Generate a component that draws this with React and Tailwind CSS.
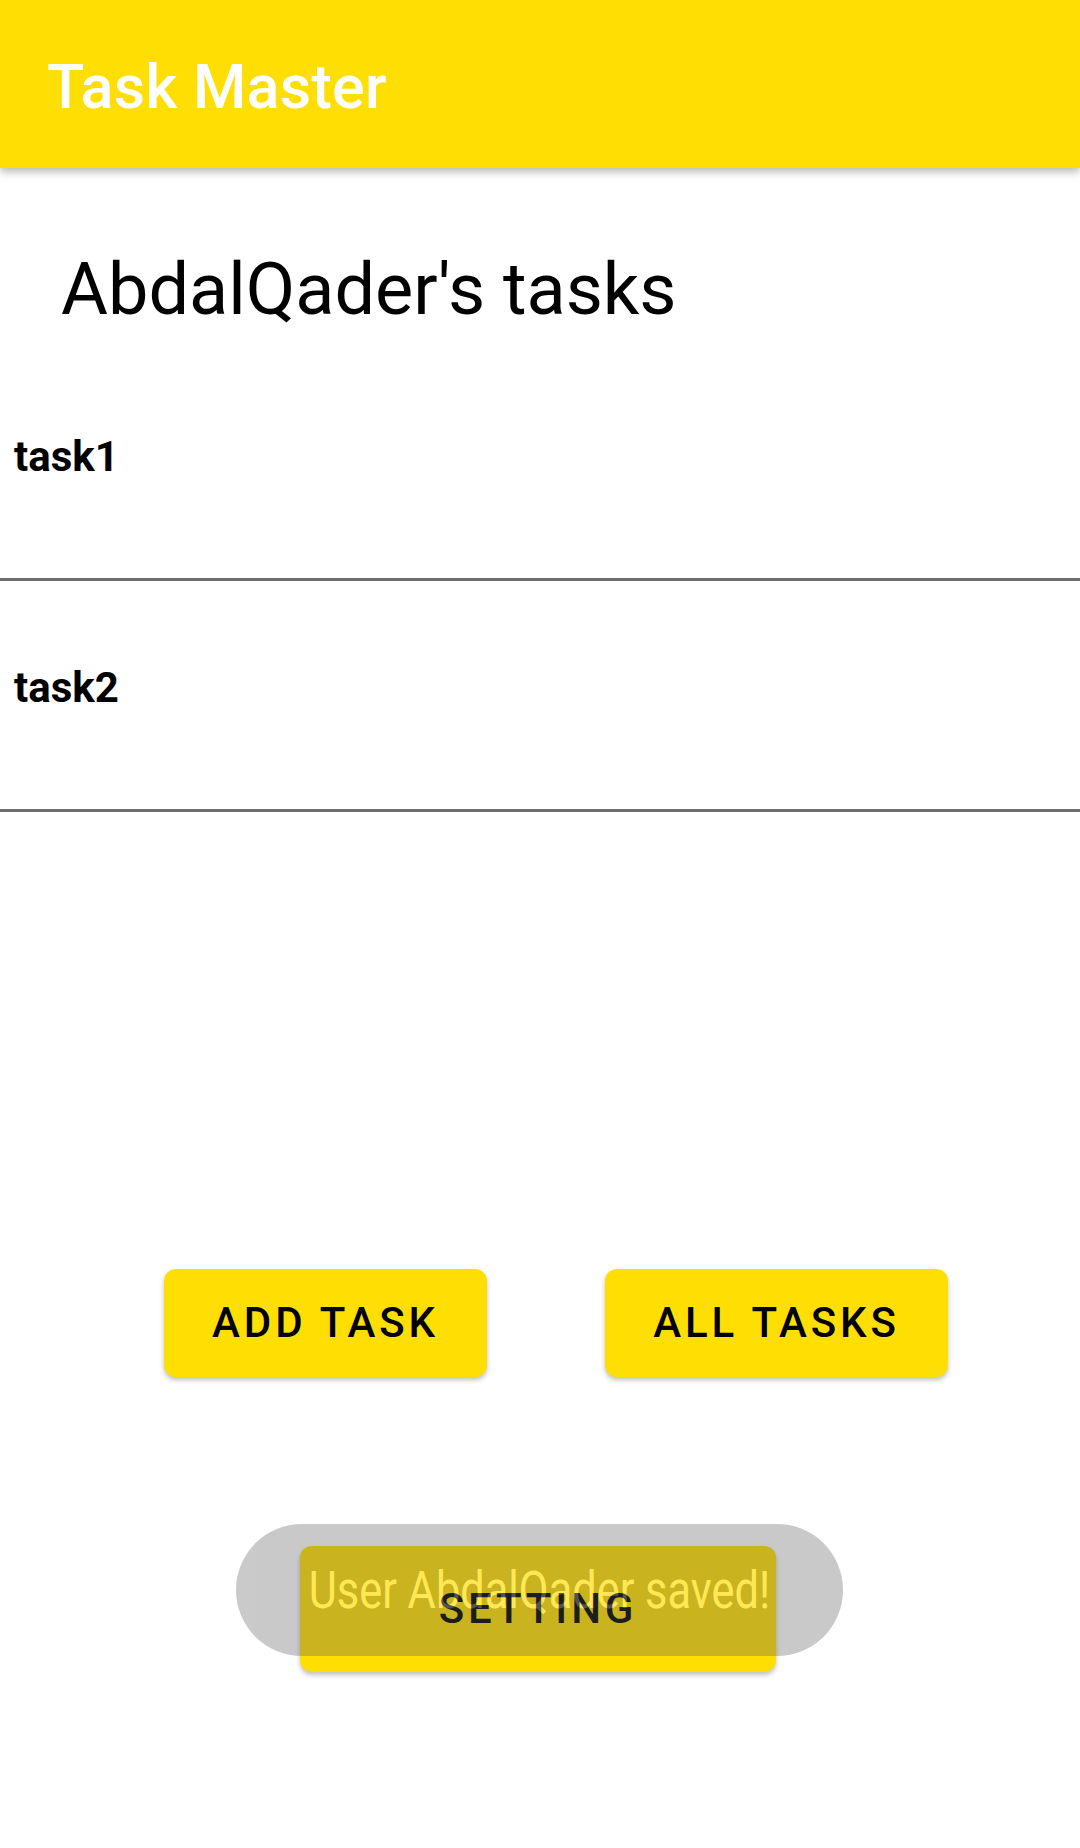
export default function App() {
  const font = { fontFamily: 'Roboto, "Liberation Sans", sans-serif' }
  return (
    <div className="relative min-h-[1848px] bg-white" style={font}>

      {/* Toolbar */}
      <div className="h-[168px] bg-[#ffde03] pl-[47px] pt-[57px] shadow-[0_4px_8px_rgba(0,0,0,0.28)] relative z-10">
        <p className="text-white text-[61px] leading-none font-medium tracking-[0.3px]">Task Master</p>
      </div>

      {/* Heading */}
      <h1 className="mt-[86px] pl-[61px] text-[72px] leading-none font-normal text-black">AbdalQader's tasks</h1>

      {/* Task list */}
      <div className="mt-[24px]">
        {['task1', 'task2'].map((t) => (
          <div key={t} className="pt-[86px] pb-[100px] border-b-[3px] border-[#6e6e6e]">
            <p className="pl-[14px] text-[42px] leading-none font-bold text-black">{t}</p>
          </div>
        ))}
      </div>

      {/* Buttons */}
      <div className="mt-[457px] flex pl-[164px] gap-[118px]">
        <button className="w-[323px] h-[108px] rounded-[12px] bg-[#ffde03] flex items-center justify-center text-[42px] leading-none font-medium tracking-[3.9px] text-black shadow-[0_3px_5px_rgba(0,0,0,0.25)]">
          ADD TASK
        </button>
        <button className="w-[343px] h-[108px] rounded-[12px] bg-[#ffde03] flex items-center justify-center text-[42px] leading-none font-medium tracking-[3.9px] text-black shadow-[0_3px_5px_rgba(0,0,0,0.25)]">
          ALL TASKS
        </button>
      </div>

      <div className="mt-[169px] pl-[300px]">
        <button className="w-[476px] h-[126px] rounded-[12px] bg-[#ffde03] flex items-center justify-center text-[42px] leading-none font-medium tracking-[3.9px] text-black shadow-[0_3px_5px_rgba(0,0,0,0.25)]">
          SETTING
        </button>
      </div>

      {/* Toast */}
      <div className="absolute left-[236px] top-[1524px] w-[607px] h-[132px] rounded-full bg-[#5a5a5a] opacity-[0.32] flex items-center justify-center">
        <span className="inline-block text-white text-[51px] leading-none scale-x-[0.85] whitespace-nowrap">User AbdalQader saved!</span>
      </div>

    </div>
  )
}
